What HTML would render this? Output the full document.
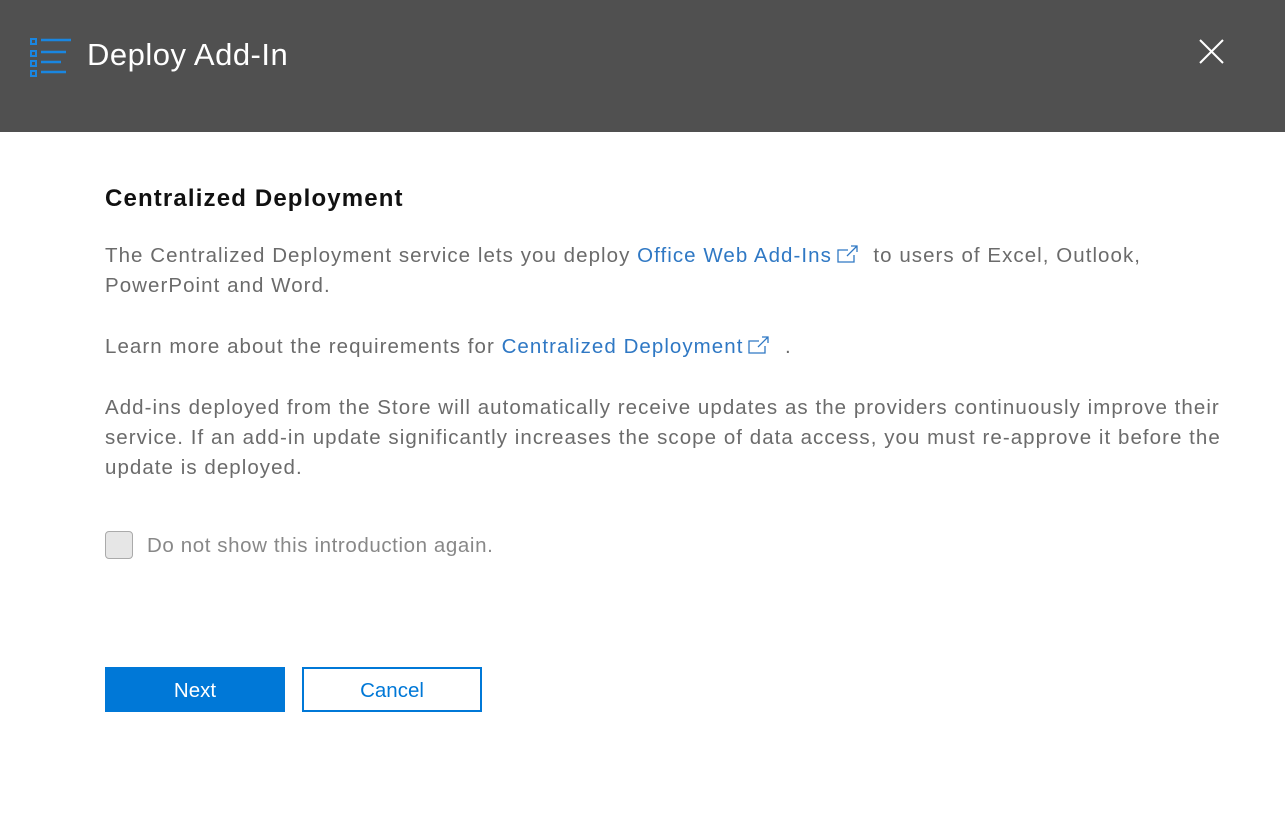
<!DOCTYPE html>
<html><head><style>
body{margin:0;width:1285px;height:829px;background:#fff;font-family:"Liberation Sans",sans-serif;overflow:hidden;position:relative}
.hdr{position:absolute;left:0;top:0;width:1285px;height:132px;background:#505050}
.ttl{position:absolute;left:87px;top:37px;color:#fff;font-size:31px;font-weight:300;letter-spacing:0.5px}
.x{position:absolute;left:1199px;top:39px}
.c{position:absolute;left:105px;color:#6b6b6b;font-size:20.5px;line-height:30px;width:1170px;letter-spacing:1.05px;white-space:nowrap}
h2{position:absolute;left:105px;top:185px;margin:0;font-size:24px;font-weight:bold;color:#111;letter-spacing:1.15px}
a{color:#2f78c4;text-decoration:none}
.ext{display:inline-block;vertical-align:-1px;margin-left:4px}
.cb{position:absolute;left:105px;top:531px;width:28px;height:28px;border:1px solid #aaa;border-radius:4px;background:#e6e6e6;box-sizing:border-box}
.cbl{position:absolute;left:147px;top:532px;font-size:20.5px;color:#888;line-height:28px;letter-spacing:0.6px}
.btn{position:absolute;top:667px;width:180px;height:45px;box-sizing:border-box;font-size:20.5px;text-align:center;line-height:48px}
</style></head><body>
<div class="hdr">
<svg style="position:absolute;left:28px;top:36px" width="45" height="42">
<g fill="none" stroke="#1a86e0" stroke-width="2">
<rect x="3" y="3" width="5" height="5"/><rect x="3" y="15" width="5" height="5"/><rect x="3" y="25" width="5" height="5"/><rect x="3" y="35" width="5" height="5"/>
</g>
<g stroke="#1a86e0" stroke-width="2.5">
<line x1="13" y1="4" x2="43" y2="4"/><line x1="13" y1="16" x2="38" y2="16"/><line x1="13" y1="26" x2="33" y2="26"/><line x1="13" y1="36" x2="38" y2="36"/>
</g></svg>
<div class="ttl">Deploy Add-In</div>
<svg class="x" width="25" height="25"><g stroke="#fff" stroke-width="2"><line x1="1" y1="1" x2="24" y2="24"/><line x1="24" y1="1" x2="1" y2="24"/></g></svg>
</div>
<h2>Centralized Deployment</h2>
<div class="c" style="top:241px">The Centralized Deployment service lets you deploy <a>Office Web Add-Ins<svg class="ext" width="24" height="18"><g fill="none" stroke="#2f78c4" stroke-width="1.3"><path d="M12 5H2V17H18V10"/><path d="M11 11L21 1M15 1H21V7"/></g></svg></a> &nbsp;to users of Excel, Outlook,<br>PowerPoint and Word.</div>
<div class="c" style="top:332px">Learn more about the requirements for <a>Centralized Deployment<svg class="ext" width="24" height="18"><g fill="none" stroke="#2f78c4" stroke-width="1.3"><path d="M12 5H2V17H18V10"/><path d="M11 11L21 1M15 1H21V7"/></g></svg></a> &nbsp;.</div>
<div class="c" style="top:393px">Add-ins deployed from the Store will automatically receive updates as the providers continuously improve their<br>service. If an add-in update significantly increases the scope of data access, you must re-approve it before the<br>update is deployed.</div>
<div class="cb"></div>
<div class="cbl">Do not show this introduction again.</div>
<div class="btn" style="left:105px;background:#0078d7;color:#fff">Next</div>
<div class="btn" style="left:302px;border:2px solid #0078d7;color:#0078d7;line-height:44px">Cancel</div>
</body></html>
